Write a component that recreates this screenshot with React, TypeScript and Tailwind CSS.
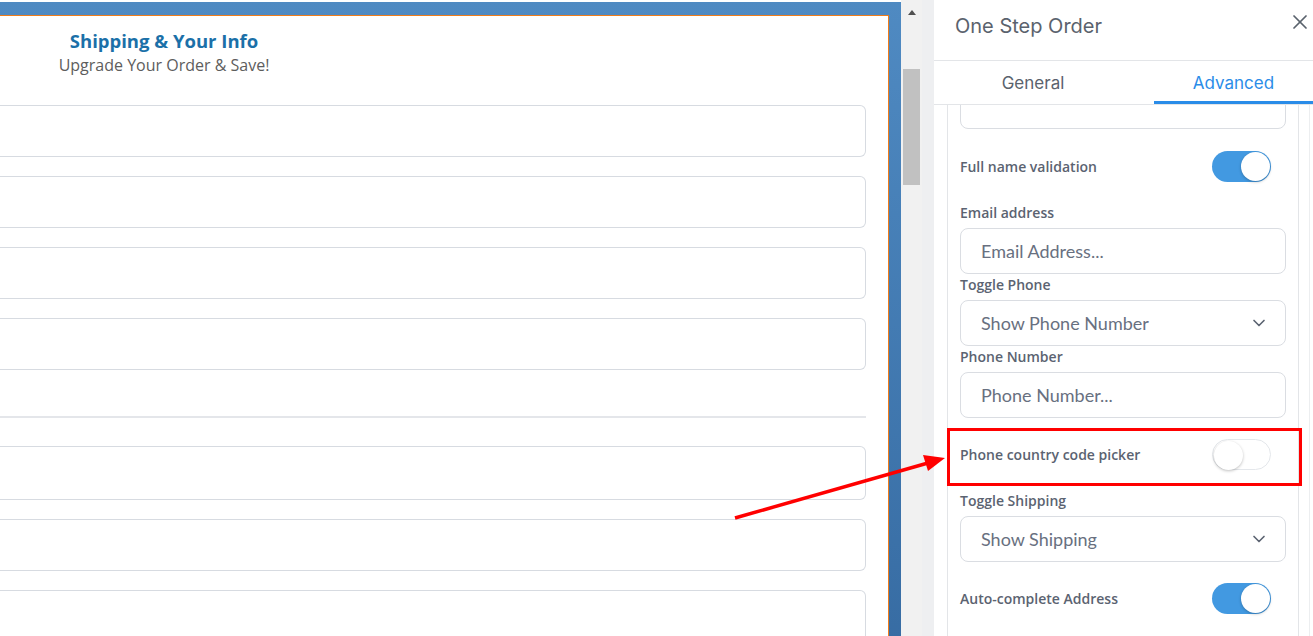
import { X, ChevronDown } from 'lucide-react'

const sans = { fontFamily: 'Inter, "Open Sans", sans-serif' }

function Toggle({ on }: { on: boolean }) {
  return (
    <div
      className={`relative h-[31px] w-[59px] rounded-full ${
        on ? 'bg-[#4299e1]' : 'border border-[#e4e7eb] bg-white'
      }`}
    >
      <div
        className={`absolute top-[1px] h-[29px] w-[29px] rounded-full bg-white shadow-[0_1px_3px_rgba(0,0,0,0.25)] ${
          on ? 'right-[1px]' : 'left-[1px] top-0'
        }`}
      />
    </div>
  )
}

function Label({ children }: { children: React.ReactNode }) {
  return (
    <div className="h-[20px] text-[14px] font-semibold leading-[20px] text-[#5b6371]">{children}</div>
  )
}

function Field({ text, select }: { text: string; select?: boolean }) {
  return (
    <div className="mt-[5px] flex h-[46px] items-center justify-between rounded-[8px] border border-[#dadde2] pl-[20px] pr-[16px] font-['Lato'] text-[18px] text-[#687080]">
      <span>{text}</span>
      {select && <ChevronDown size={20} strokeWidth={2} className="text-[#5b6371]" />}
    </div>
  )
}

function ToggleRow({ label, on }: { label: string; on: boolean }) {
  return (
    <div className="flex h-[31px] items-center justify-between pr-[15px]">
      <span className="text-[14px] font-semibold text-[#5b6371]">{label}</span>
      <Toggle on={on} />
    </div>
  )
}

function FormBox({ h, mt }: { h: string; mt: string }) {
  return <div className={`${h} ${mt} -ml-[10px] rounded-r-[6px] border border-l-0 border-[#d7dbe1] bg-white`} />
}

export default function App() {
  return (
    <div className="relative flex h-[636px] w-[1313px] overflow-hidden bg-white" style={sans}>
      {/* Builder canvas */}
      <div className="flex w-[901px] flex-col pt-[2px]">
        <div className="flex flex-1 flex-col bg-gradient-to-b from-[#4f8ac2] to-[#376ca3] pt-[13px] pr-[12px]">
          <div className="flex-1 border-t border-r border-[#f07c1a] bg-white pr-[22px]">
            <div className="w-[328px] pt-[13px] text-center font-['Open_Sans']">
              <div className="text-[18.5px] font-bold leading-[24px] text-[#1b70a8]">Shipping &amp; Your Info</div>
              <div className="text-[16px] leading-[24px] text-[#5d5d5d]">Upgrade Your Order &amp; Save!</div>
            </div>
            <div className="overflow-hidden">
              <FormBox h="h-[52px]" mt="mt-[28px]" />
              <FormBox h="h-[52px]" mt="mt-[19px]" />
              <FormBox h="h-[52px]" mt="mt-[19px]" />
              <FormBox h="h-[52px]" mt="mt-[19px]" />
              <div className="mt-[46px] h-[2px] bg-[#e4e6ea]" />
              <FormBox h="h-[54px]" mt="mt-[28px]" />
              <FormBox h="h-[52px]" mt="mt-[19px]" />
              <FormBox h="h-[60px]" mt="mt-[19px]" />
            </div>
          </div>
        </div>
      </div>

      {/* Scrollbar */}
      <div className="flex w-[21px] flex-col items-center bg-[#f1f1f1]">
        <div className="mt-[10px] h-0 w-0 border-x-[4px] border-b-[5px] border-x-transparent border-b-[#505050]" />
        <div className="mt-[54px] h-[116px] w-[17px] bg-[#c1c1c1]" />
      </div>
      <div className="w-[12px] bg-[#eeeff1]" />

      {/* Side panel */}
      <div className="flex w-[379px] flex-col bg-white">
        <div className="flex h-[61px] items-center justify-between border-b border-[#e3e5e8] pb-[8px] pl-[21px] pr-[1px]">
          <span className="text-[20px] text-[#5a626d]">One Step Order</span>
          <X size={24} strokeWidth={1.75} className="-mt-[8px] text-[#5a626d]" />
        </div>
        <div className="flex h-[44px] border-b border-[#e3e5e8] text-[17px]">
          <div className="flex w-[198px] items-center justify-center pt-[2px] text-[#5a626d]">General</div>
          <div className="w-[22px]" />
          <div className="flex w-[159px] items-center justify-center border-b-[3px] border-[#2a8ce8] pt-[5px] text-[#2a8ce8]">
            Advanced
          </div>
        </div>
        <div className="flex flex-1 overflow-hidden pl-[13px] font-['Open_Sans']">
          <div className="w-[352px] border-x border-[#e3e5e8] px-[12px]">
            <div className="-mt-[22px] h-[46px] rounded-[8px] border border-[#dadde2]" />
            <div className="mt-[22px]">
              <ToggleRow label="Full name validation" on />
            </div>
            <div className="mt-[21px]">
              <Label>Email address</Label>
              <Field text="Email Address..." />
            </div>
            <div className="mt-[1px]">
              <Label>Toggle Phone</Label>
              <Field text="Show Phone Number" select />
            </div>
            <div className="mt-[1px]">
              <Label>Phone Number</Label>
              <Field text="Phone Number..." />
            </div>
            <div className="mt-[21px]">
              <ToggleRow label="Phone country code picker" on={false} />
            </div>
            <div className="mt-[21px]">
              <Label>Toggle Shipping</Label>
              <Field text="Show Shipping" select />
            </div>
            <div className="mt-[21px]">
              <ToggleRow label="Auto-complete Address" on />
            </div>
          </div>
          <div className="ml-[10px] w-px bg-[#eceef0]" />
        </div>
      </div>

      {/* Annotation */}
      <div className="absolute left-[947px] top-[428px] h-[58px] w-[355px] border-[3px] border-[#ff0000]" />
      <svg className="absolute left-0 top-0" width="1313" height="636">
        <line x1="735" y1="518" x2="928" y2="463" stroke="#ff0000" strokeWidth="3.5" />
        <polygon points="945,458 923,455 928,471" fill="#ff0000" />
      </svg>
    </div>
  )
}
